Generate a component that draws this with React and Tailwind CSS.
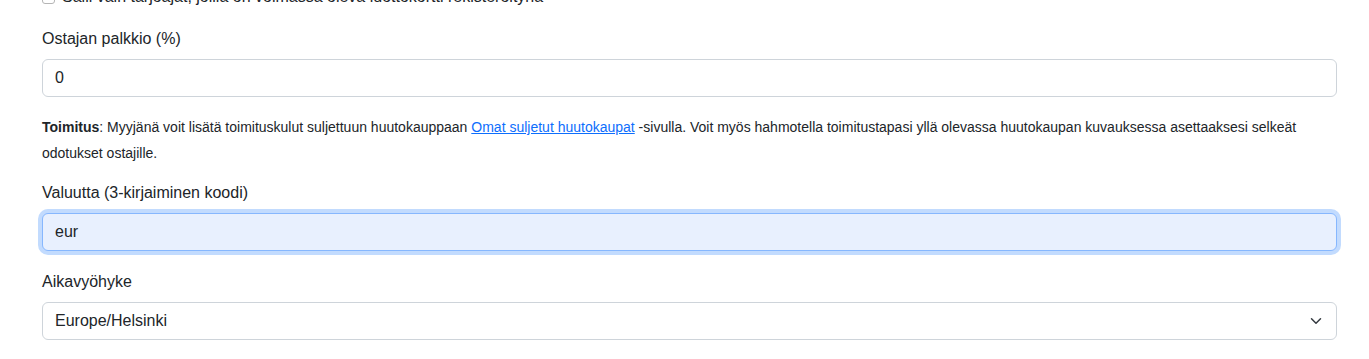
import React from 'react';

const inputClass =
  'block w-full h-[38px] px-3 text-base text-[#212529] bg-white border border-[#ced4da] rounded-[6px] outline-none';

export default function App() {
  return (
    <div className="w-[1369px] h-[359px] overflow-hidden bg-white pl-[42px] pr-[32px] text-[#212529] font-['Liberation_Sans',Arial,sans-serif]">
      {/* checkbox row, mostly scrolled off the top */}
      <div className="-mt-[15px] flex items-center h-6 gap-[7px]">
        <span className="w-[13px] h-[13px] border border-[#b5b5b5] rounded-[3px] bg-white" />
        <span className="text-base">Salli vain tarjoajat, joilla on voimassa oleva luottokortti rekisteröitynä</span>
      </div>

      <label className="block mt-[18px] mb-2 leading-6 text-base">Ostajan palkkio (%)</label>
      <input className={inputClass} defaultValue="0" />

      <p className="mt-[17px] text-sm leading-[26px]">
        <strong>Toimitus</strong>: Myyjänä voit lisätä toimituskulut suljettuun huutokauppaan{' '}
        <a href="#" className="text-[#0d6efd] underline">Omat suljetut huutokaupat</a> -sivulla. Voit myös
        hahmotella toimitustapasi yllä olevassa huutokaupan kuvauksessa asettaaksesi selkeät odotukset ostajille.
      </p>

      <label className="block mt-[15px] mb-2 leading-6 text-base">Valuutta (3-kirjaiminen koodi)</label>
      <input
        className="block w-full h-[38px] px-3 text-base text-[#212529] bg-[#e8f0fe] border border-[#86b7fe] rounded-[6px] outline-none ring-4 ring-[#c2dbfe]"
        defaultValue="eur"
      />

      <label className="block mt-[19px] mb-2 leading-6 text-base">Aikavyöhyke</label>
      <div className="relative">
        <select className={inputClass + ' appearance-none'} defaultValue="Europe/Helsinki">
          <option>Europe/Helsinki</option>
        </select>
        <svg
          className="absolute right-[13px] top-[13px] w-4 h-3 pointer-events-none"
          viewBox="0 0 16 16"
          fill="none"
          stroke="#343a40"
          strokeWidth="2"
          strokeLinecap="round"
          strokeLinejoin="round"
        >
          <path d="m2 5 6 6 6-6" />
        </svg>
      </div>
    </div>
  );
}
